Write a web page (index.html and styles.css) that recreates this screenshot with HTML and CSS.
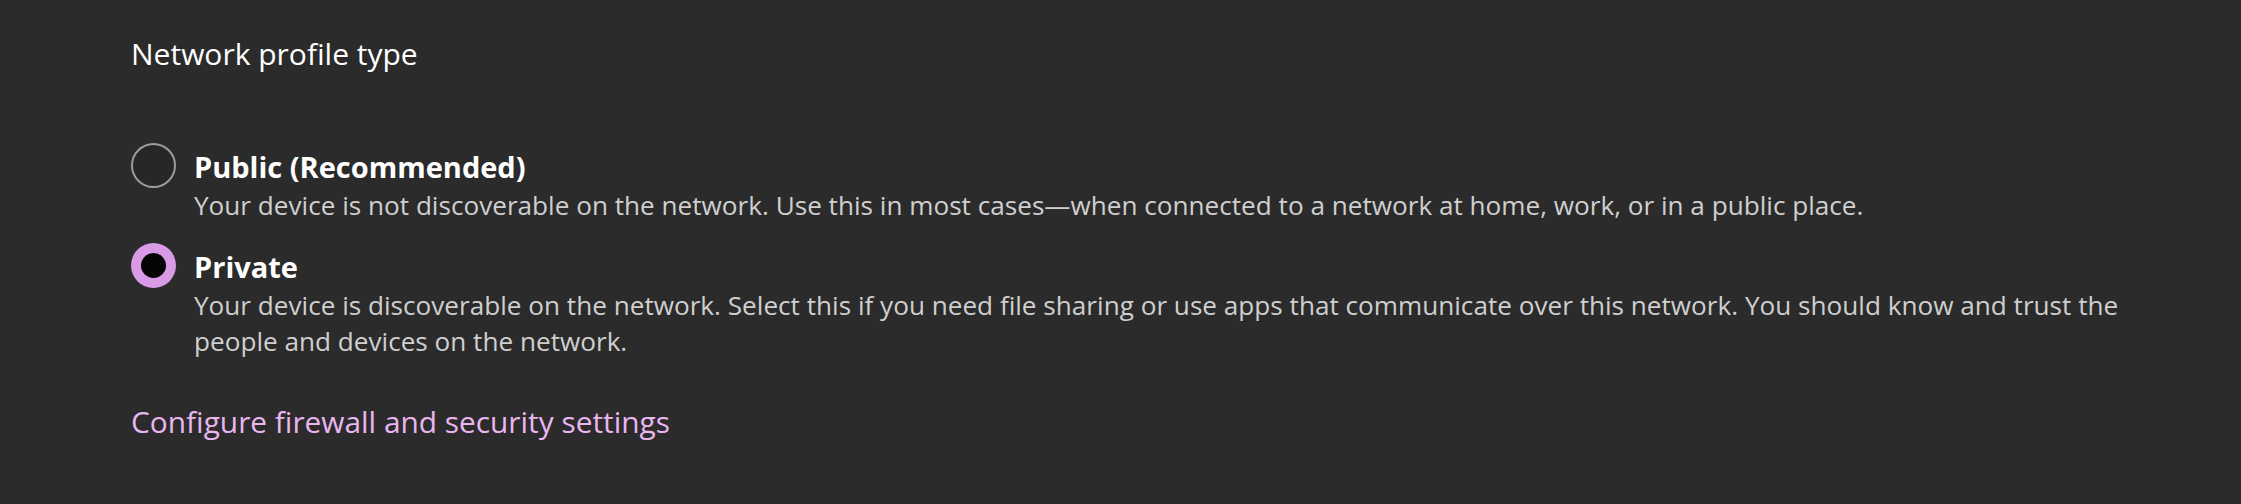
FILE: index.html
```html
<!DOCTYPE html>
<html lang="en">
<head>
<meta charset="utf-8">
<title>Network profile type</title>
<link rel="stylesheet" href="styles.css">
</head>
<body>
<main class="page">
  <div class="heading">Network profile type</div>
  <div class="options">
    <div class="option">
      <span class="radio"></span>
      <div class="text">
        <div class="label">Public (Recommended)</div>
        <div class="desc">Your device is not discoverable on the network. Use this in most cases—when connected to a network at home, work, or in a public place.</div>
      </div>
    </div>
    <div class="option">
      <span class="radio checked"></span>
      <div class="text">
        <div class="label">Private</div>
        <div class="desc">Your device is discoverable on the network. Select this if you need file sharing or use apps that communicate over this network. You should know and trust the people and devices on the network.</div>
      </div>
    </div>
  </div>
  <a class="link" href="#">Configure firewall and security settings</a>
</main>
</body>
</html>
```

FILE: styles.css
```css
html, body {
  margin: 0;
  padding: 0;
  background: #2b2b2b;
}
body {
  width: 2241px;
  height: 504px;
  overflow: hidden;
  font-family: "Open Sans", "Noto Sans", sans-serif;
}
.page {
  display: flex;
  flex-direction: column;
  align-items: flex-start;
  padding: 35px 0 0 131px;
  width: 2030px;
}
.heading {
  color: #ffffff;
  font-size: 30px;
  line-height: 38px;
}
.options {
  display: flex;
  flex-direction: column;
  gap: 20px;
  margin-top: 70px;
}
.option {
  display: flex;
  align-items: flex-start;
  gap: 18px;
}
.radio {
  flex: none;
  box-sizing: border-box;
  width: 45px;
  height: 45px;
  border-radius: 50%;
  border: 2.5px solid #9c9c9c;
  background: #272727;
  display: flex;
  align-items: center;
  justify-content: center;
}
.radio.checked {
  border: none;
  background: #d99be5;
}
.radio.checked::after {
  content: "";
  width: 25px;
  height: 25px;
  border-radius: 50%;
  background: #050505;
}
.text {
  margin-top: 4px;
  display: flex;
  flex-direction: column;
}
.label {
  color: #ffffff;
  font-size: 29px;
  font-weight: 700;
  line-height: 40px;
}
.desc {
  color: #cfcfcf;
  font-size: 26.15px;
  line-height: 36px;
}
.link {
  margin-top: 44px;
  color: #e9b6f0;
  font-size: 29.85px;
  line-height: 38px;
  text-decoration: none;
}
```
